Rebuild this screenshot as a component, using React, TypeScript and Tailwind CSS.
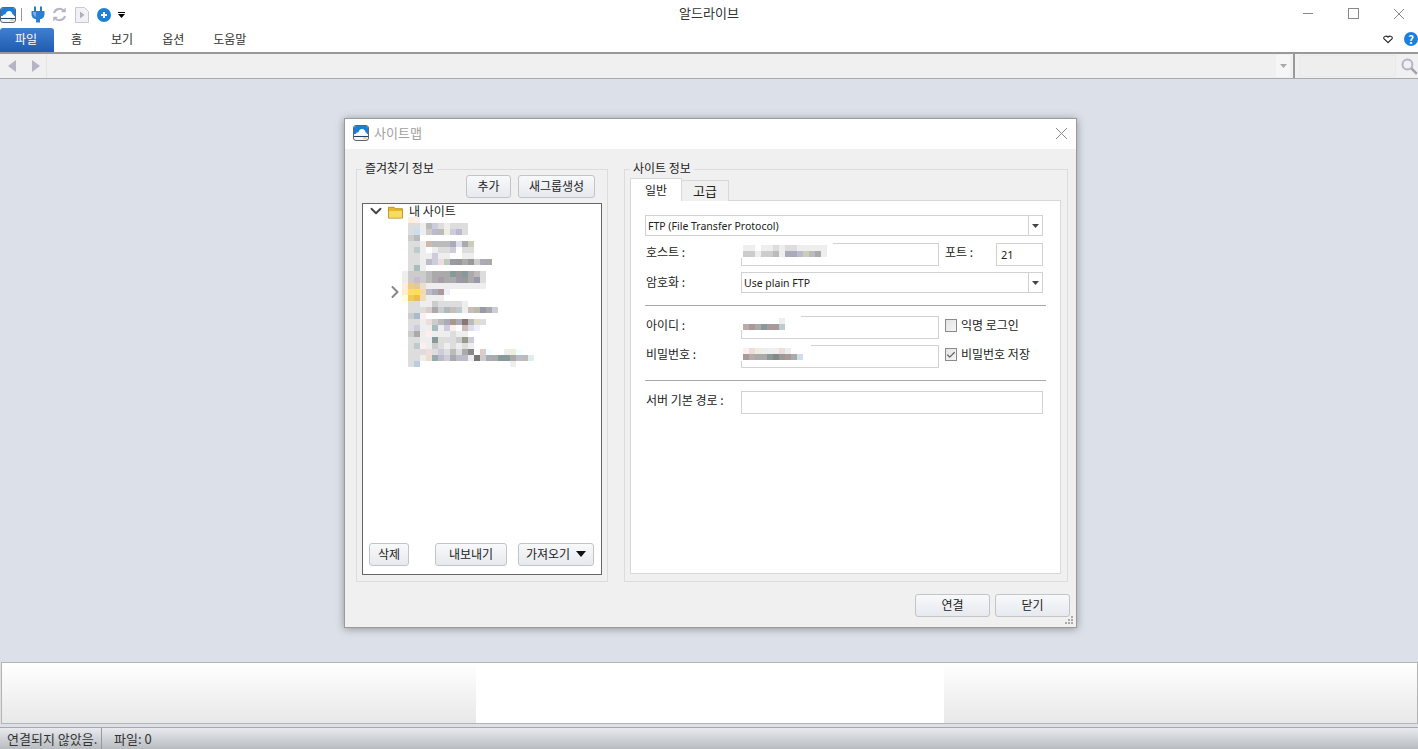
import { ChevronDown, ChevronRight, Check } from "lucide-react";

// blurred-out site list, one string per 6px row, "." = empty cell
const TREE_BLUR = [
  ". fed fee fff fff fff fff",
  ". ddd ddd eee bbb ccd ddd eee ddd ddd ddd",
  ". ddd cde eee ccc bbc bbb eed ccd bbc ddd",
  ". ccc bbb fff",
  ". ddd ddd eee cba bbb bbb bbb aab dde aaa ccb fff",
  ". ddd bcc eee fff eee ddd ddd ccd fff ddd ddd",
  ". ddd ddd eee eee ccd eee eee fff fff eee eee fff",
  ". ddd ddd eee bbc ccd edd bcb 99a 999 aaa 999 ccc aab aaa",
  "fff ddd abb eee fff fff fff fff fff fff fff fff fff fff",
  "eee ccc ccc ccc bbb aaa aaa aaa 899 999 899 aaa bbb ddd",
  "eee ccc cbc ccc bbb aaa a9a aaa aaa 99a 999 aaa 99a ddd",
  "fed ec8 dc9 edc eee eee eee eee eee eee eee eee eee eee",
  "fec fd6 fd5 eda bbc aab a99 eef",
  "ffd ec5 eb5 edb eee eee eee",
  ". ddd ddd eee eee ccc ddd ddd ddd ddd eee",
  ". ddd ddd ddd dcc aaa ccc abb cbb bcc eee cbb bba 99a aaa ccd",
  ". ccc abc fee",
  ". ddd ddd eee edd ccc bbb aab a98 aab 877 bbb ddc ddd",
  ". ddd ccd eee eee abb eee ccd fee fff cbb dde eef",
  ". ccc aaa eee fee eee eee eee ddd eee eee",
  ". ddd ddd eee eee 899 ddd ddd ddd ccc 998 ccd",
  ". ddd bcc fee eee ccc ddd eee ddd eee ddd eee",
  ". ddd ddd ddd edd ddd ccd ddd bbb ddd aaa 888 fff dcc eff . . eee eed eff",
  ". ddd ddd eee edc 9aa bbc ccd aaa bbc bbc eee 777 ccc aab aaa 899 899 aaa bbc bbb dee",
  ". ddd bcd fff . . . . . . . . . . . . . . eee",
];
const HOST_BLUR = ["eee eee fff eee eee ddd eee ddd ddd eee eee eee eee eee fff", "ccc ccc eee ccc ccc bbb eee aab aab bbc ccb bbb aaa eee fff"];
const ID_BLUR = ["fff fff fff fff fff fff eee", "baa a99 aaa 899 a99 a99 bcc"];
const PW_BLUR = ["fee edd eed eee eee eee edd eee fff", "a99 baa aaa aaa 899 888 999 a99 aaa cde"];

function Mosaic({ rows, className = "" }: { rows: string[]; className?: string }) {
  return (
    <div className={`flex flex-col ${className}`}>
      {rows.map((row, i) => (
        <div key={i} className="flex h-[6px]">
          {row.split(" ").map((c, j) => (
            <div key={j} className="w-[6px] h-[6px]" style={c === "." ? undefined : { backgroundColor: `#${c}` }} />
          ))}
        </div>
      ))}
    </div>
  );
}

function AppLogo({ size = 16 }: { size?: number }) {
  return (
    <svg width={size} height={size} viewBox="0 0 16 16">
      <rect x="0.5" y="0.5" width="15" height="15" rx="2.5" fill="#f4f6f8" stroke="#5b6470" />
      <path d="M1 9V3a2 2 0 0 1 2-2h10a2 2 0 0 1 2 2v6z" fill="#1b7fd8" />
      <path d="M2.5 10c0-2 1.5-3 3-2.8C6 5.2 7.500 4 9 4c2 0 3.300 1.500 3.400 3.300 1.100.1 1.800 1.300 1.600 2.700z" fill="#fff" />
      <rect x="1" y="11" width="14" height="1" fill="#25406a" />
      <rect x="10.500" y="12.500" width="3" height="1" fill="#e0a030" />
    </svg>
  );
}

function PlugIcon() {
  return (
    <svg width="14" height="17" viewBox="0 0 14 17">
      <rect x="3" y="0.500" width="2" height="5" fill="#2a7ac8" />
      <rect x="9" y="0.500" width="2" height="5" fill="#2a7ac8" />
      <path d="M0.500 5h13v3.500c0 2.500-2 4.500-4.500 4.800V16.500H5v-3.200C2.500 13 .5 11 .5 8.500z" fill="#2a80d0" />
      <path d="M2 6h3v5C3 10 2 8.500 2 6z" fill="#6fb4ee" />
    </svg>
  );
}

function RefreshIcon() {
  return (
    <svg width="15" height="15" viewBox="0 0 15 15" fill="none" stroke="#b4b4c4" strokeWidth="2">
      <path d="M2 6a5.700 5.700 0 0 1 10-2" />
      <path d="M13 9a5.700 5.700 0 0 1-10 2" />
      <path d="M13.500 1v4h-4z" fill="#b4b4c4" strokeWidth="0.500" />
      <path d="M1.500 14v-4h4z" fill="#b4b4c4" strokeWidth="0.500" />
    </svg>
  );
}

function FilePlayIcon() {
  return (
    <svg width="14" height="16" viewBox="0 0 14 16">
      <path d="M.5.5h9l4 4v11H.500z" fill="#f2f2f6" stroke="#c8c8d0" />
      <path d="M5 4.500l4.500 3.500L5 11.500z" fill="#b0b0bc" />
    </svg>
  );
}

function PlusCircle() {
  return (
    <svg width="14" height="14" viewBox="0 0 14 14">
      <circle cx="7" cy="7" r="7" fill="#1a80d8" />
      <path d="M7 4v6M4 7h6" stroke="#fff" strokeWidth="2" />
    </svg>
  );
}

function Caret({ className = "" }: { className?: string }) {
  return (
    <svg width="7" height="4" viewBox="0 0 7 4" className={className}>
      <path d="M0 0h7L3.500 4z" fill="currentColor" />
    </svg>
  );
}

function CloseGlyph({ size }: { size: number }) {
  return (
    <svg width={size} height={size} viewBox={`0 0 ${size} ${size}`} stroke="#888" strokeWidth="1">
      <path d={`M0 0L${size} ${size}M${size} 0L0 ${size}`} />
    </svg>
  );
}

function DlgButton({ children, className = "" }: { children: React.ReactNode; className?: string }) {
  return (
    <button className={`h-[23px] pb-[2px] border border-[#c2c4c8] rounded-[3px] bg-gradient-to-b from-[#f8f9fb] to-[#e6e9ee] text-[12px] text-[#222] flex items-center justify-center ${className}`}>
      {children}
    </button>
  );
}

function Select({ value, className = "" }: { value: string; className?: string }) {
  return (
    <div className={`h-[21px] border border-[#d2d2d2] bg-white flex items-center ${className}`}>
      <span className="flex-1 pl-[2px] pt-[2px] text-[10.5px] text-[#222] font-['Noto_Sans',sans-serif]">{value}</span>
      <div className="w-[14px] h-full border-l border-[#d2d2d2] flex items-center justify-center text-[#444]">
        <Caret />
      </div>
    </div>
  );
}

function Field({ className = "", children }: { className?: string; children?: React.ReactNode }) {
  return <div className={`h-[23px] border border-[#d2d2d2] bg-white relative ${className}`}>{children}</div>;
}

export default function App() {
  return (
    <div className="w-[1418px] h-[749px] overflow-hidden flex flex-col bg-[#dce0e8] text-[12px] text-[#222] font-['Noto_Sans_CJK_KR',sans-serif]">
      {/* title bar */}
      <div className="h-[27px] bg-white flex items-center relative shrink-0">
        <div className="flex items-center pt-[2px]">
          <AppLogo size={16} />
          <div className="w-px h-[13px] bg-[#999] ml-[5px] mr-[9px]" />
          <PlugIcon />
          <div className="ml-[7px]"><RefreshIcon /></div>
          <div className="ml-[8px]"><FilePlayIcon /></div>
          <div className="ml-[8px]"><PlusCircle /></div>
          <div className="ml-[7px] flex flex-col items-center gap-[1px] text-black">
            <div className="w-[7px] h-px bg-black" />
            <Caret />
          </div>
        </div>
        <div className="absolute left-0 right-0 top-[3px] text-center text-[13px] text-[#333]">알드라이브</div>
        <div className="absolute right-[14px] top-0 flex items-center h-[27px]">
          <div className="w-[10px] h-px bg-[#888] mr-[35px]" />
          <div className="w-[11px] h-[11px] border border-[#888] mr-[35px]" />
          <CloseGlyph size={10} />
        </div>
      </div>

      {/* ribbon tabs */}
      <div className="h-[25px] bg-white flex items-end relative shrink-0">
        <div className="w-[54px] h-[24px] pr-[2px] rounded-t-[3px] bg-gradient-to-b from-[#3f7fd0] to-[#1f5cb0] text-white flex items-center justify-center pb-[2px]">파일</div>
        <div className="flex items-center h-[24px] pb-[2px] text-[#333]">
          <span className="ml-[17px]">홈</span>
          <span className="ml-[29px]">보기</span>
          <span className="ml-[29px]">옵션</span>
          <span className="ml-[29px]">도움말</span>
        </div>
        <div className="absolute right-0 top-[5px] flex items-center">
          <svg width="10" height="9" viewBox="0 0 11 9" className="mr-[11px]">
            <path d="M5.500 8L1 3.500C0 1.500 3.500-.500 5.500 2 7.500-.500 11 1.500 10 3.500z" fill="#fff" stroke="#222" strokeWidth="1.200" />
          </svg>
          <div className="w-[14px] h-[14px] rounded-full bg-[#1a80e0] text-white text-[11px] font-bold flex items-center justify-center">?</div>
        </div>
      </div>

      {/* address bar */}
      <div className="h-[27px] border-t-2 border-[#999] border-b border-b-[#aaa] bg-[#f0f0f0] flex items-stretch shrink-0">
        <div className="w-[46px] flex items-center pl-[8px] gap-[16px]">
          <svg width="8" height="12" viewBox="0 0 8 12"><path d="M8 0v12L0 6z" fill="#b4b4c4" /></svg>
          <svg width="8" height="12" viewBox="0 0 8 12"><path d="M0 0v12l8-6z" fill="#b4b4c4" /></svg>
        </div>
        <div className="flex-1 border-l border-[#e4e4e4] bg-[#f0f0f0] flex justify-end items-center pr-[2px]">
          <div className="w-[14px] h-[22px] bg-[#f6f6f6] flex items-center justify-center text-[#aaa]"><Caret /></div>
        </div>
        <div className="w-[2px] bg-[#999] ml-[1px]" />
        <div className="w-[123px] flex items-center pl-[4px]">
          <div className="w-[98px] h-[22px] bg-[#eeeeee] border border-[#eaeaee]" />
          <svg width="17" height="17" viewBox="0 0 17 17" className="ml-[5px]" fill="none">
            <circle cx="6.500" cy="6.500" r="5" stroke="#b4b4c8" strokeWidth="2" />
            <path d="M10.500 10.500L16 16" stroke="#a0a0b0" strokeWidth="2.500" />
          </svg>
        </div>
      </div>

      {/* desktop area */}
      <div className="h-[583px] pl-[344px] pt-[39px] shrink-0">
        <div className="w-[733px] h-[510px] border border-[#9a9a9a] shadow-[0_1px_8px_rgba(0,0,0,0.35)] bg-[#f0f0f0] flex flex-col relative">
          <div className="h-[30px] bg-white flex items-center pl-[8px] pr-[9px] pb-[2px] shrink-0">
            <AppLogo size={16} />
            <span className="ml-[5px] text-[13px] text-[#a0a0a0]">사이트맵</span>
            <div className="ml-auto"><CloseGlyph size={11} /></div>
          </div>

          <div className="flex pl-[11px] pt-[20px]">
            {/* favorites group */}
            <fieldset className="w-[252px] h-[413px] border border-[#dcdcdc] px-[5px] relative">
              <legend className="absolute -top-[10px] left-[5px] bg-[#f0f0f0] px-[3px] leading-[16px]">즐겨찾기 정보</legend>
              <div className="flex justify-end gap-[7px] pt-[5px] pr-[7px]">
                <DlgButton className="w-[45px]">추가</DlgButton>
                <DlgButton className="w-[77px]">새그룹생성</DlgButton>
              </div>
              <div className="mt-[5px] h-[372px] border border-[#666] bg-white relative flex flex-col">
                <div className="flex items-center h-[14px] pl-[4px]">
                  <ChevronDown size={18} strokeWidth={2.500} className="text-[#444]" />
                  <svg width="15" height="14" viewBox="0 0 16 14" className="ml-[3px] mt-[2px]">
                    <path d="M0.500 2h6l1 1.500h8v10h-15z" fill="#e8b828" stroke="#b89020" />
                    <path d="M1 6h14v7H1z" fill="#f8dc60" />
                  </svg>
                  <span className="ml-[6px] text-[#222]">내 사이트</span>
                </div>
                <Mosaic rows={TREE_BLUR} className="ml-[39px] -mt-px" />
                <ChevronRight size={20} strokeWidth={2.500} className="absolute left-[22px] top-[78px] text-[#888]" />
                <div className="mt-auto flex px-[6px] pb-[8px]">
                  <DlgButton className="w-[40px]">삭제</DlgButton>
                  <DlgButton className="w-[72px] ml-[26px]">내보내기</DlgButton>
                  <DlgButton className="w-[76px] ml-[11px] gap-[6px]">
                    가져오기
                    <svg width="10" height="6" viewBox="0 0 10 6"><path d="M0 0h10L5 6z" fill="#111" /></svg>
                  </DlgButton>
                </div>
              </div>
            </fieldset>

            {/* site info group */}
            <fieldset className="w-[444px] h-[413px] ml-[16px] border border-[#dcdcdc] px-[5px] relative">
              <legend className="absolute -top-[10px] left-[5px] bg-[#f0f0f0] px-[3px] leading-[16px]">사이트 정보</legend>
              <div className="flex items-start h-[23px] mt-[8px] relative z-10">
                <div className="w-[52px] h-[23px] bg-white border border-[#d8d8d8] border-b-0 flex items-center justify-center">일반</div>
                <div className="w-[47px] h-[21px] mt-[2px] bg-[#f0f0f0] border border-[#d8d8d8] border-l-0 border-b-0 flex items-center justify-center text-[13px]">고급</div>
              </div>
              <div className="w-[431px] h-[374px] -mt-px border border-[#d8d8d8] bg-white pl-[14px] pt-[14px]">
                <Select value="FTP (File Transfer Protocol)" className="w-[398px]" />
                <div className="flex items-center mt-[7px] w-[398px]">
                  <span className="w-[96px] pl-px -mt-[6px]">호스트 :</span>
                  <Field className="w-[198px]">
                    <div className="absolute -left-px -top-[5px] w-[92px] h-[19px] bg-white pl-[2px] pt-[6px]">
                      <Mosaic rows={HOST_BLUR} />
                    </div>
                  </Field>
                  <span className="ml-[6px] w-[51px] -mt-[6px]">포트 :</span>
                  <Field className="w-[47px] flex items-center pl-[4px] pt-[2px] text-[11px] font-['Noto_Sans',sans-serif]">21</Field>
                </div>
                <div className="flex items-center mt-[6px] w-[398px]">
                  <span className="w-[96px] pl-px -mt-[2px]">암호화 :</span>
                  <Select value="Use plain FTP" className="w-[302px]" />
                </div>
                <div className="w-[401px] h-px bg-[#a8a8a8] mt-[12px]" />
                <div className="flex items-center mt-[10px]">
                  <span className="w-[96px] pl-px -mt-[6px]">아이디 :</span>
                  <Field className="w-[198px]">
                    <div className="absolute -left-px -top-px w-[60px] h-[14px] bg-white pl-[2px] pt-[2px]">
                      <Mosaic rows={ID_BLUR} />
                    </div>
                  </Field>
                  <label className="flex items-center ml-[6px] gap-[4px] -mt-[6px]">
                    <span className="w-[12px] h-[13px] mt-[2px] border border-[#8a8a8a] bg-gradient-to-br from-[#e4e4e4] to-[#f4f4f4]" />
                    익명 로그인
                  </label>
                </div>
                <div className="flex items-center mt-[6px]">
                  <span className="w-[96px] pl-px -mt-[6px]">비밀번호 :</span>
                  <Field className="w-[198px]">
                    <div className="absolute -left-px -top-px w-[70px] h-[16px] bg-white pl-[2px] pt-[3px]">
                      <Mosaic rows={PW_BLUR} />
                    </div>
                  </Field>
                  <label className="flex items-center ml-[6px] gap-[4px] -mt-[6px]">
                    <span className="w-[12px] h-[13px] mt-[2px] border border-[#8a8a8a] bg-gradient-to-br from-[#e4e4e4] to-[#f4f4f4] flex items-center justify-center">
                      <Check size={10} strokeWidth={3} className="text-[#666]" />
                    </span>
                    비밀번호 저장
                  </label>
                </div>
                <div className="w-[401px] h-px bg-[#a8a8a8] mt-[12px]" />
                <div className="flex items-center mt-[10px]">
                  <span className="w-[96px] pl-px -mt-[6px]">서버 기본 경로 :</span>
                  <Field className="w-[302px]" />
                </div>
              </div>
            </fieldset>
          </div>

          {/* footer buttons */}
          <div className="flex justify-end gap-[5px] pr-[6px] mt-[12px]">
            <DlgButton className="w-[75px]">연결</DlgButton>
            <DlgButton className="w-[75px]">닫기</DlgButton>
          </div>
          <svg width="9" height="9" viewBox="0 0 9 9" className="absolute right-[2px] bottom-[2px]" fill="#aaa">
            <rect x="6" y="0" width="2" height="2" />
            <rect x="3" y="3" width="2" height="2" />
            <rect x="6" y="3" width="2" height="2" />
            <rect x="0" y="6" width="2" height="2" />
            <rect x="3" y="6" width="2" height="2" />
            <rect x="6" y="6" width="2" height="2" />
          </svg>
        </div>
      </div>

      {/* bottom panel */}
      <div className="h-[62px] border border-[#b4b4b4] ml-px flex shrink-0 bg-white">
        <div className="w-[474px] bg-gradient-to-b from-white to-[#e8e8e8]" />
        <div className="w-[468px] bg-white" />
        <div className="flex-1 bg-gradient-to-b from-white to-[#e8e8e8]" />
      </div>

      {/* status bar */}
      <div className="flex-1 mt-[3px] border-t border-[#a8a8a8] bg-gradient-to-b from-[#e8eaee] to-[#b8bcc0] flex items-center text-[#333] text-[13px]">
        <span className="pl-[7px] w-[101px] whitespace-nowrap">연결되지 않았음.</span>
        <div className="w-px h-full bg-[#999]" />
        <span className="pl-[12px]">파일: 0</span>
      </div>
    </div>
  );
}
